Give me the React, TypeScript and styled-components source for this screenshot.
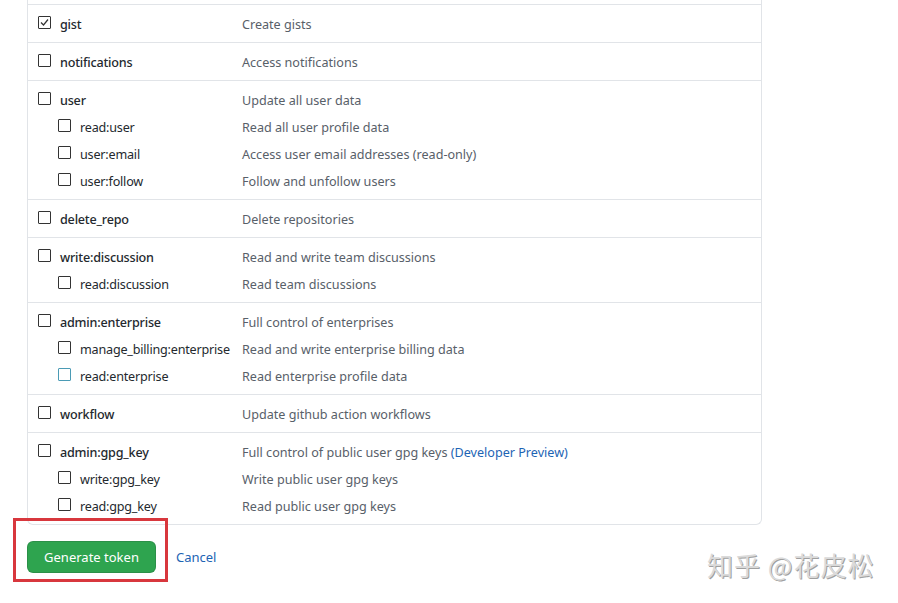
import React from "react";
import styled, { createGlobalStyle } from "styled-components";

const Global = createGlobalStyle`
  html, body { margin: 0; padding: 0; background: #fff; }
  body { font-family: "Noto Sans", "Open Sans", Arial, sans-serif; color: #24292e; }
`;

const Page = styled.div`
  position: relative;
  width: 898px;
  height: 603px;
  overflow: hidden;
  padding-left: 27px;
  box-sizing: border-box;
`;

const Card = styled.div`
  width: 735px;
  box-sizing: border-box;
  border: 1px solid #e1e4e8;
  border-top: none;
  border-radius: 0 0 6px 6px;
  padding-top: 4px;
`;

const Group = styled.div`
  border-top: 1px solid #e1e4e8;
  padding: 9px 0 8px 10px;
`;

const Line = styled.div<{ $sub?: boolean }>`
  display: grid;
  grid-template-columns: ${(p) => (p.$sub ? "184px 1fr" : "204px 1fr")};
  align-items: center;
  height: 20px;
  margin-top: ${(p) => (p.$sub ? "7px" : "0")};
  padding-left: ${(p) => (p.$sub ? "20px" : "0")};
  font-size: 12.6px;
`;

const Label = styled.label<{ $sub?: boolean }>`
  display: flex;
  align-items: center;
  gap: 9px;
  font-weight: ${(p) => (p.$sub ? 400 : 500)};
  letter-spacing: -0.2px;
  color: #24292e;
  white-space: nowrap;
`;

const Box = styled.span<{ $focus?: boolean }>`
  display: inline-flex;
  align-items: center;
  justify-content: center;
  width: 13px;
  height: 13px;
  box-sizing: border-box;
  border: 1px solid ${(p) => (p.$focus ? "#4b9bb5" : "#333")};
  border-radius: 1px;
  background: #fff;
  margin-top: -3px;
  flex-shrink: 0;
`;

const Desc = styled.span`
  color: #586069;
  white-space: nowrap;
`;

const Link = styled.a`
  color: #1d64b4;
  text-decoration: none;
`;

const Actions = styled.div`
  display: flex;
  align-items: center;
  gap: 20px;
  margin-top: 16px;
`;

const GreenButton = styled.button`
  width: 129px;
  height: 32px;
  border: 1px solid rgba(27, 31, 35, 0.15);
  border-radius: 6px;
  background: #2ea44f;
  color: #fff;
  font-family: inherit;
  font-size: 13px;
  padding: 0;
`;

const CancelLink = styled.a`
  color: #1d64b4;
  font-size: 13px;
  text-decoration: none;
`;

const Highlight = styled.div`
  position: absolute;
  left: 13px;
  top: 518px;
  width: 155px;
  height: 64px;
  box-sizing: border-box;
  border: 3px solid #d8373d;
  pointer-events: none;
`;

const Watermark = styled.div`
  position: absolute;
  left: 707px;
  top: 546px;
  font-family: "Noto Sans CJK SC", sans-serif;
  font-size: 26px;
  color: #dadada;
  text-shadow: 1px 1px 0 #a0a0a0;
  letter-spacing: 1px;
  white-space: nowrap;
`;

type Item = { name: string; desc: React.ReactNode; checked?: boolean; focus?: boolean };
type G = { main: Item; subs?: Item[] };

const groups: G[] = [
  { main: { name: "gist", desc: "Create gists", checked: true } },
  { main: { name: "notifications", desc: "Access notifications" } },
  {
    main: { name: "user", desc: "Update all user data" },
    subs: [
      { name: "read:user", desc: "Read all user profile data" },
      { name: "user:email", desc: "Access user email addresses (read-only)" },
      { name: "user:follow", desc: "Follow and unfollow users" },
    ],
  },
  { main: { name: "delete_repo", desc: "Delete repositories" } },
  {
    main: { name: "write:discussion", desc: "Read and write team discussions" },
    subs: [{ name: "read:discussion", desc: "Read team discussions" }],
  },
  {
    main: { name: "admin:enterprise", desc: "Full control of enterprises" },
    subs: [
      { name: "manage_billing:enterprise", desc: "Read and write enterprise billing data" },
      { name: "read:enterprise", desc: "Read enterprise profile data", focus: true },
    ],
  },
  { main: { name: "workflow", desc: "Update github action workflows" } },
  {
    main: {
      name: "admin:gpg_key",
      desc: (
        <>
          Full control of public user gpg keys <Link href="#">(Developer Preview)</Link>
        </>
      ),
    },
    subs: [
      { name: "write:gpg_key", desc: "Write public user gpg keys" },
      { name: "read:gpg_key", desc: "Read public user gpg keys" },
    ],
  },
];

const Check = () => (
  <svg width="11" height="11" viewBox="0 0 11 11">
    <path d="M2 5.5 L4.5 8 L9 2.5" fill="none" stroke="#333" strokeWidth="1.2" />
  </svg>
);

const Row = ({ item, sub }: { item: Item; sub?: boolean }) => (
  <Line $sub={sub}>
    <Label $sub={sub}>
      <Box $focus={item.focus}>{item.checked && <Check />}</Box>
      {item.name}
    </Label>
    <Desc>{item.desc}</Desc>
  </Line>
);

export default function App() {
  return (
    <Page>
      <Global />
      <Card>
        {groups.map((g) => (
          <Group key={g.main.name}>
            <Row item={g.main} />
            {g.subs?.map((s) => <Row key={s.name} item={s} sub />)}
          </Group>
        ))}
      </Card>
      <Actions>
        <GreenButton>Generate token</GreenButton>
        <CancelLink href="#">Cancel</CancelLink>
      </Actions>
      <Highlight />
      <Watermark>知乎 @花皮松</Watermark>
    </Page>
  );
}
